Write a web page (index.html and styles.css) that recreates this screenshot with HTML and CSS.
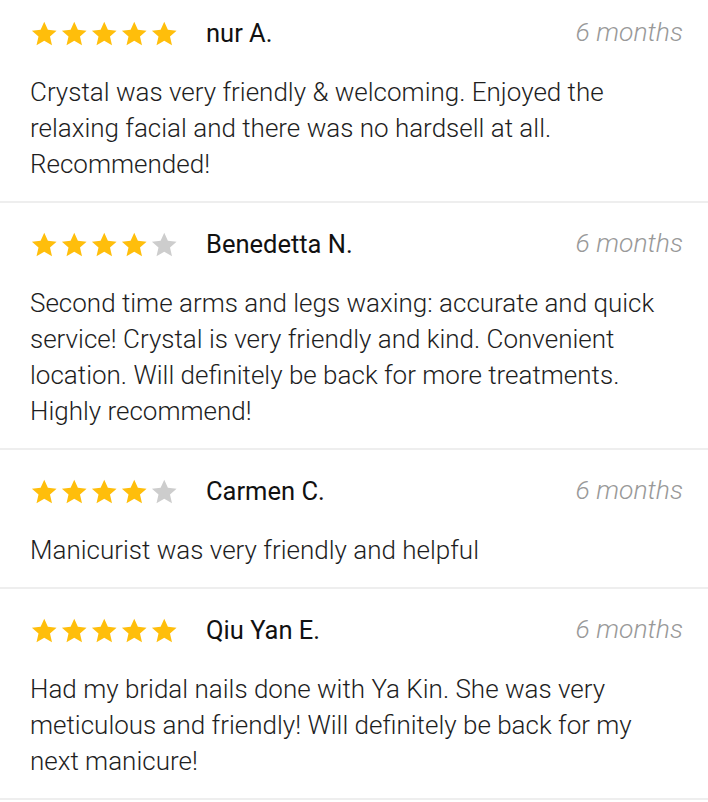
FILE: index.html
```html
<!DOCTYPE html>
<html lang="en">
<head>
    <meta charset="UTF-8">
    <meta name="viewport" content="width=device-width, initial-scale=1.0">
    <title>Reviews</title>
    <link rel="stylesheet" href="styles.css">
</head>
<body>
    <svg width="0" height="0" class="defs">
        <defs>
            <path id="star" d="M12 1.5l3.1 6.9 7.4.7-5.6 5 1.7 7.4L12 17.6l-6.6 3.9 1.7-7.4-5.6-5 7.4-.7z"/>
        </defs>
    </svg>
    <div class="reviews">
        <div class="review">
            <div class="review-head">
                <div class="stars">
                    <svg viewBox="0 0 24 23"><use href="#star"/></svg>
                    <svg viewBox="0 0 24 23"><use href="#star"/></svg>
                    <svg viewBox="0 0 24 23"><use href="#star"/></svg>
                    <svg viewBox="0 0 24 23"><use href="#star"/></svg>
                    <svg viewBox="0 0 24 23"><use href="#star"/></svg>
                </div>
                <span class="name">nur A.</span>
                <span class="date">6 months</span>
            </div>
            <p class="text">Crystal was very friendly &amp; welcoming. Enjoyed the relaxing facial and there was no hardsell at all. Recommended!</p>
        </div>
        <div class="review">
            <div class="review-head">
                <div class="stars">
                    <svg viewBox="0 0 24 23"><use href="#star"/></svg>
                    <svg viewBox="0 0 24 23"><use href="#star"/></svg>
                    <svg viewBox="0 0 24 23"><use href="#star"/></svg>
                    <svg viewBox="0 0 24 23"><use href="#star"/></svg>
                    <svg viewBox="0 0 24 23" class="off"><use href="#star"/></svg>
                </div>
                <span class="name">Benedetta N.</span>
                <span class="date">6 months</span>
            </div>
            <p class="text">Second time arms and legs waxing: accurate and quick service! Crystal is very friendly and kind. Convenient location. Will definitely be back for more treatments. Highly recommend!</p>
        </div>
        <div class="review">
            <div class="review-head">
                <div class="stars">
                    <svg viewBox="0 0 24 23"><use href="#star"/></svg>
                    <svg viewBox="0 0 24 23"><use href="#star"/></svg>
                    <svg viewBox="0 0 24 23"><use href="#star"/></svg>
                    <svg viewBox="0 0 24 23"><use href="#star"/></svg>
                    <svg viewBox="0 0 24 23" class="off"><use href="#star"/></svg>
                </div>
                <span class="name">Carmen C.</span>
                <span class="date">6 months</span>
            </div>
            <p class="text">Manicurist was very friendly and helpful</p>
        </div>
        <div class="review">
            <div class="review-head">
                <div class="stars">
                    <svg viewBox="0 0 24 23"><use href="#star"/></svg>
                    <svg viewBox="0 0 24 23"><use href="#star"/></svg>
                    <svg viewBox="0 0 24 23"><use href="#star"/></svg>
                    <svg viewBox="0 0 24 23"><use href="#star"/></svg>
                    <svg viewBox="0 0 24 23"><use href="#star"/></svg>
                </div>
                <span class="name">Qiu Yan E.</span>
                <span class="date">6 months</span>
            </div>
            <p class="text">Had my bridal nails done with Ya Kin. She was very meticulous and friendly! Will definitely be back for my next manicure!</p>
        </div>
    </div>
</body>
</html>
```

FILE: styles.css
```css
body {
    margin: 0;
    background: #fff;
    font-family: Roboto, "Liberation Sans", sans-serif;
    color: #222;
}
.defs {
    position: absolute;
}
.review {
    padding: 26px 25px 19px 30px;
    border-bottom: 2px solid #eee;
}
.review:first-child {
    padding-top: 18px;
}
.review-head {
    display: flex;
    align-items: center;
    height: 30px;
    margin-bottom: 26px;
}
.stars {
    display: flex;
    gap: 1.5px;
    width: 176px;
}
.stars svg {
    width: 28.5px;
    height: 27px;
    fill: #ffbe0b;
}
.stars svg.off {
    fill: #cdcdcd;
}
.name {
    font-size: 25.5px;
    color: #111;
}
.date {
    margin-left: auto;
    margin-bottom: 4px;
    font-size: 26.5px;
    font-weight: 300;
    font-style: italic;
    color: #999;
}
.text {
    margin: 0;
    font-size: 26px;
    font-weight: 300;
    line-height: 36px;
    color: #1e1e1e;
}
```
